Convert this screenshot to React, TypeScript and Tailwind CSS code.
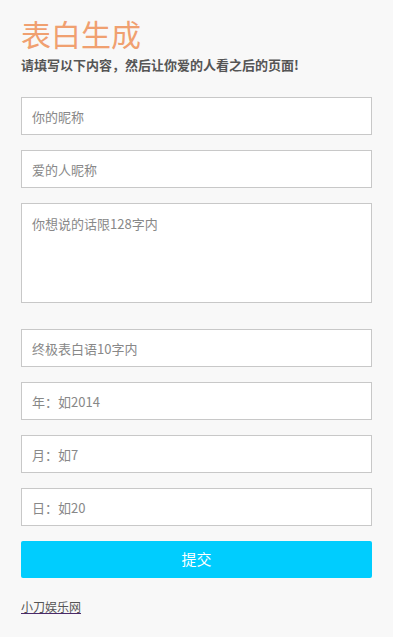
const fields = [
    { placeholder: "你的昵称" },
    { placeholder: "爱的人昵称" },
];

const lower = ["终极表白语10字内", "年：如2014", "月：如7", "日：如20"];

function Field({ placeholder }: { placeholder: string }) {
    return (
        <input
            type="text"
            placeholder={placeholder}
            className="block h-[38px] w-full border border-[#c8c8c8] bg-white px-[10px] text-[13px] text-[#555] placeholder:text-[#888] outline-none"
        />
    );
}

export default function App() {
    return (
        <div
            className="min-h-[637px] bg-[#f8f8f8] px-[21px] pt-[14px]"
            style={{ fontFamily: '"Noto Sans CJK SC", "Noto Sans", sans-serif' }}
        >
            <h1 className="text-[30px] leading-[38px] text-[#f0a070]">表白生成</h1>
            <p className="mt-[3px] text-[13px] font-bold leading-[20px] text-[#555]">
                请填写以下内容，然后让你爱的人看之后的页面!
            </p>
            <form className="mt-[22px] flex flex-col gap-[15px]" onSubmit={(e) => e.preventDefault()}>
                {fields.map((f) => (
                    <Field key={f.placeholder} placeholder={f.placeholder} />
                ))}
                <textarea
                    placeholder="你想说的话限128字内"
                    className="mb-[11px] block h-[100px] w-full resize-none border border-[#c8c8c8] bg-white px-[10px] pt-[10px] text-[13px] text-[#555] placeholder:text-[#888] outline-none"
                />
                {lower.map((p) => (
                    <Field key={p} placeholder={p} />
                ))}
                <button
                    type="submit"
                    className="h-[37px] w-full rounded-[2px] bg-[#00cdfe] text-[15px] text-white"
                >
                    提交
                </button>
            </form>
            <a href="#" className="mt-[20px] inline-block text-[12px] text-[#555] underline decoration-[#4b2a6a]">
                小刀娱乐网
            </a>
        </div>
    );
}
